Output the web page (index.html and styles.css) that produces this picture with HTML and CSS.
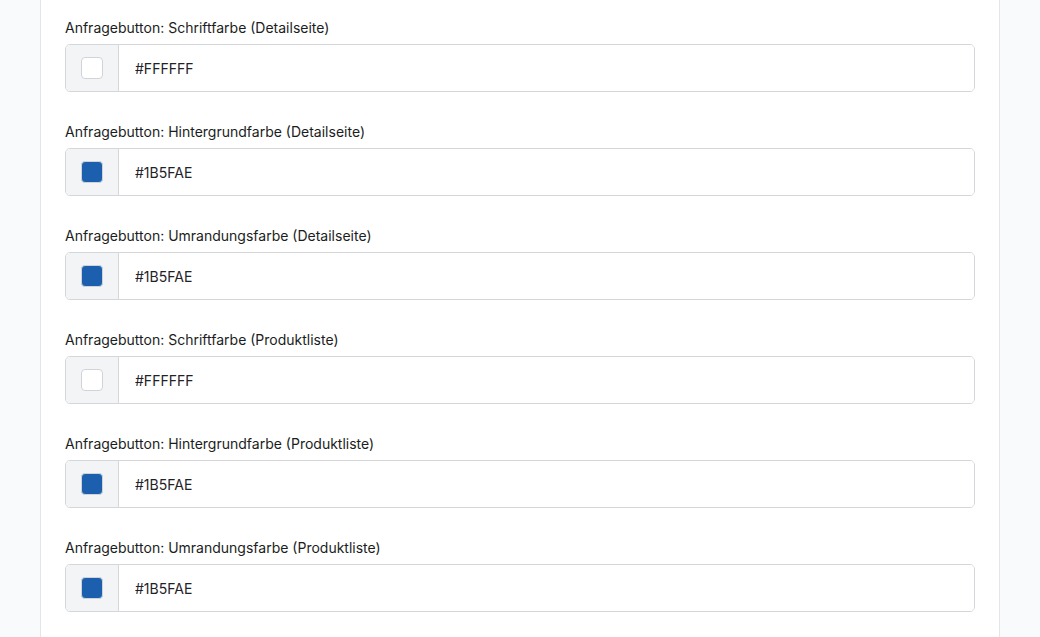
FILE: index.html
```html
<!DOCTYPE html>
<html lang="de">
<head>
    <meta charset="utf-8">
    <title>Farbeinstellungen</title>
    <link rel="stylesheet" href="styles.css">
</head>
<body>
<div class="page">
    <div class="card">
        <div class="field">
            <div class="color-input">
                <span class="swatch-box"><span class="swatch" style="background:#1B5FAE"></span></span>
                <input class="hex" type="text" value="#1B5FAE">
            </div>
        </div>

        <div class="field">
            <label>Anfragebutton: Schriftfarbe (Detailseite)</label>
            <div class="color-input">
                <span class="swatch-box"><span class="swatch" style="background:#FFFFFF"></span></span>
                <input class="hex" type="text" value="#FFFFFF">
            </div>
        </div>

        <div class="field">
            <label>Anfragebutton: Hintergrundfarbe (Detailseite)</label>
            <div class="color-input">
                <span class="swatch-box"><span class="swatch" style="background:#1B5FAE"></span></span>
                <input class="hex" type="text" value="#1B5FAE">
            </div>
        </div>

        <div class="field">
            <label>Anfragebutton: Umrandungsfarbe (Detailseite)</label>
            <div class="color-input">
                <span class="swatch-box"><span class="swatch" style="background:#1B5FAE"></span></span>
                <input class="hex" type="text" value="#1B5FAE">
            </div>
        </div>

        <div class="field">
            <label>Anfragebutton: Schriftfarbe (Produktliste)</label>
            <div class="color-input">
                <span class="swatch-box"><span class="swatch" style="background:#FFFFFF"></span></span>
                <input class="hex" type="text" value="#FFFFFF">
            </div>
        </div>

        <div class="field">
            <label>Anfragebutton: Hintergrundfarbe (Produktliste)</label>
            <div class="color-input">
                <span class="swatch-box"><span class="swatch" style="background:#1B5FAE"></span></span>
                <input class="hex" type="text" value="#1B5FAE">
            </div>
        </div>

        <div class="field">
            <label>Anfragebutton: Umrandungsfarbe (Produktliste)</label>
            <div class="color-input">
                <span class="swatch-box"><span class="swatch" style="background:#1B5FAE"></span></span>
                <input class="hex" type="text" value="#1B5FAE">
            </div>
        </div>
    </div>
</div>
</body>
</html>
```

FILE: styles.css
```css
html, body {
    margin: 0;
    height: 100%;
    overflow: hidden;
}

body {
    background-color: #f9fafc;
    font-family: Inter, "Liberation Sans", sans-serif;
    color: #1f2328;
}

.page {
    padding: 0 40px;
    height: 100%;
}

/* the settings panel is scrolled, so the first field is cut off at the top */
.card {
    background-color: #fff;
    border-left: 1px solid #e3e5e8;
    border-right: 1px solid #e3e5e8;
    padding: 0 24px;
    min-height: calc(100% + 60px);
    box-sizing: border-box;
    margin-top: -60px;
}

.field {
    margin-bottom: 30px;
}

.field label {
    display: block;
    font-size: 14px;
    line-height: 20px;
    margin-bottom: 6px;
    color: #1a1d21;
}

.color-input {
    display: flex;
    height: 48px;
    border: 1px solid #d4d6da;
    border-radius: 5px;
    box-sizing: border-box;
    overflow: hidden;
}

.swatch-box {
    width: 52px;
    flex: none;
    display: flex;
    align-items: center;
    justify-content: center;
    background-color: #f3f4f6;
    border-right: 1px solid #d4d6da;
}

.swatch {
    width: 22px;
    height: 22px;
    border-radius: 4px;
    border: 1px solid #d0d3d8;
    box-sizing: border-box;
}

.hex {
    flex: 1;
    border: 0;
    outline: none;
    padding: 0 16px;
    font-family: inherit;
    font-size: 14px;
    color: #1f2328;
    background: #fff;
}
```
